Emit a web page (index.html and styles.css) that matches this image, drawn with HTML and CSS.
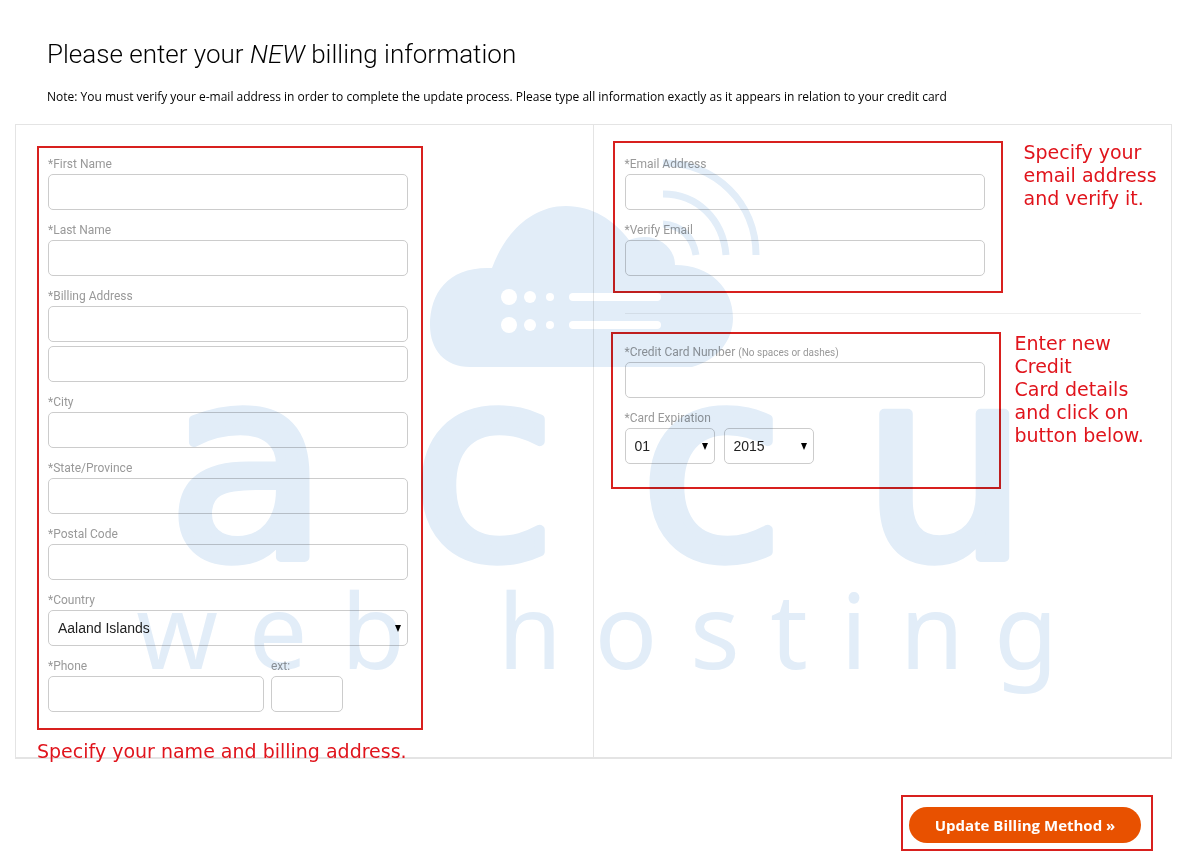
FILE: index.html
```html
<!DOCTYPE html>
<html lang="en">
<head>
    <meta charset="utf-8">
    <title>Update Billing Method</title>
    <link rel="stylesheet" href="styles.css">
</head>
<body>
    <header class="intro">
        <h1>Please enter your <em>NEW</em> billing information</h1>
        <p>Note: You must verify your e-mail address in order to complete the update process. Please type all information exactly as it appears in relation to your credit card</p>
    </header>
    <form>
        <div class="panel">
            <div class="column address">
                <div class="frame frame-address">
                    <div class="field">
                        <label for="first-name">*First Name</label>
                        <input type="text" id="first-name">
                    </div>
                    <div class="field">
                        <label for="last-name">*Last Name</label>
                        <input type="text" id="last-name">
                    </div>
                    <div class="field">
                        <label for="address-1">*Billing Address</label>
                        <input type="text" id="address-1">
                        <input type="text" id="address-2" class="second-line" aria-label="Billing Address line 2">
                    </div>
                    <div class="field">
                        <label for="city">*City</label>
                        <input type="text" id="city">
                    </div>
                    <div class="field">
                        <label for="state">*State/Province</label>
                        <input type="text" id="state">
                    </div>
                    <div class="field">
                        <label for="postal-code">*Postal Code</label>
                        <input type="text" id="postal-code">
                    </div>
                    <div class="field">
                        <label for="country">*Country</label>
                        <div class="select">
                            <select id="country">
                                <option>Aaland Islands</option>
                            </select>
                        </div>
                    </div>
                    <div class="phone-row">
                        <div class="field phone">
                            <label for="phone">*Phone</label>
                            <input type="tel" id="phone">
                        </div>
                        <div class="field ext">
                            <label for="ext">ext:</label>
                            <input type="text" id="ext">
                        </div>
                    </div>
                </div>
                <p class="hint">Specify your name and billing address.</p>
            </div>

            <div class="column payment">
                <div class="step step-email">
                    <div class="frame frame-email">
                        <div class="field">
                            <label for="email">*Email Address</label>
                            <input type="email" id="email">
                        </div>
                        <div class="field">
                            <label for="verify-email">*Verify Email</label>
                            <input type="email" id="verify-email">
                        </div>
                    </div>
                    <p class="hint">Specify your<br>email address<br>and verify it.</p>
                </div>
                <hr>
                <div class="step step-card">
                    <div class="frame frame-card">
                        <div class="field">
                            <label for="card-number">*Credit Card Number <small>(No spaces or dashes)</small></label>
                            <input type="text" id="card-number">
                        </div>
                        <div class="field">
                            <label for="card-month">*Card Expiration</label>
                            <div class="expiration">
                                <div class="select">
                                    <select id="card-month">
                                        <option>01</option>
                                    </select>
                                </div>
                                <div class="select">
                                    <select id="card-year" aria-label="Card expiration year">
                                        <option>2015</option>
                                    </select>
                                </div>
                            </div>
                        </div>
                    </div>
                    <p class="hint">Enter new<br>Credit<br>Card details<br>and click on<br>button below.</p>
                </div>
            </div>

            <svg class="watermark" viewBox="15 124 1157 635" aria-hidden="true">
                <!-- cloud -->
                <path d="M470 367C445 367 430 350 430 325C430 292 449 266 492 268C504 235 530 206 566 206C592 206 614 220 629 240C634 238 640 237 645 237C662 237 675 250 675 265C710 265 733 288 733 318C733 340 718 360 692 367Z"/>
                <g class="cutout">
                    <circle cx="509" cy="297" r="8"/>
                    <circle cx="530" cy="297" r="6"/>
                    <circle cx="550" cy="297" r="4"/>
                    <rect x="569" y="293" width="92" height="8" rx="4"/>
                    <circle cx="509" cy="325" r="8"/>
                    <circle cx="530" cy="325" r="6"/>
                    <circle cx="550" cy="325" r="4"/>
                    <rect x="569" y="321" width="92" height="8" rx="4"/>
                </g>
                <!-- signal -->
                <g class="signal">
                    <path d="M663 163C716 163 756 203 756 255"/>
                    <path d="M663 194C697 194 723 219 726 255"/>
                    <path d="M663 224C681 225 693 237 696 255"/>
                </g>
                <text class="brand" x="248 484 712 945" y="557">accu</text>
                <text class="tagline" x="177 278 373 530 530 626 715 789 854 932 1026" y="669">web hosting</text>
            </svg>
        </div>

        <div class="actions">
            <div class="frame frame-submit">
                <button type="submit">Update Billing Method »</button>
            </div>
        </div>
    </form>
</body>
</html>
```
FILE: styles.css
```css
* {
    box-sizing: border-box;
}

body {
    margin: 0;
    padding: 36px 16px 2px 15px;
    background: #fff;
    color: #000;
    font-family: Roboto, sans-serif;
}

.intro {
    padding-left: 32px;
}

h1 {
    margin: 0;
    font-size: 26px;
    font-weight: 300;
    line-height: 36px;
}

.intro p {
    margin: 16px 0 18px;
    font-family: "Open Sans", sans-serif;
    font-size: 12px;
    line-height: 18px;
}

.panel {
    position: relative;
    display: grid;
    grid-template-columns: 1fr 1fr;
    border: 1px solid #e4e4e4;
    border-bottom-width: 2px;
}

.address {
    padding: 21px 0 0 21px;
    border-right: 1px solid #e4e4e4;
}

.payment {
    padding: 16px 12px 0 17px;
}

.frame {
    border: 2px solid #d8201e;
}

.frame-address {
    width: 386px;
    padding: 7px 13px 16px 9px;
}

.frame-email {
    width: 390px;
    padding: 12px 16px 15px 10px;
}

.frame-card {
    width: 390px;
    padding: 9px 14px 23px 12px;
}

.field + .field,
.field + .phone-row {
    margin-top: 11px;
}

label {
    display: block;
    margin-bottom: 1px;
    color: #999;
    font-size: 12px;
    line-height: 18px;
}

label small {
    font-size: 10px;
    line-height: 1;
}

input,
select {
    display: block;
    width: 100%;
    height: 36px;
    padding: 0 9px;
    border: 1px solid #ccc;
    border-radius: 5px;
    background: #fff;
    color: #222;
    font-family: "Liberation Sans", Arial, sans-serif;
    font-size: 14px;
}

select {
    appearance: none;
}

.second-line {
    margin-top: 4px;
}

.select {
    position: relative;
}

.select::after {
    content: "";
    position: absolute;
    top: 15px;
    right: 7px;
    border: 3px solid transparent;
    border-top: 7px solid #000;
    border-bottom: 0;
    pointer-events: none;
}

.phone-row {
    display: flex;
    gap: 7px;
}

.phone-row .field {
    margin-top: 0;
}

.phone {
    width: 216px;
}

.ext {
    width: 72px;
}

.step {
    display: flex;
    align-items: flex-start;
}

.step .frame {
    flex: none;
}

.step-email {
    gap: 21px;
    padding-left: 2px;
}

.step-card {
    gap: 14px;
}

hr {
    margin: 20px 18px 18px 14px;
    border: 0;
    border-top: 1px solid #eee;
}

.expiration {
    display: flex;
    gap: 9px;
}

.expiration .select {
    width: 90px;
}

.hint {
    margin: 0;
    color: #e0141c;
    font-family: "DejaVu Sans", sans-serif;
    font-size: 19px;
    line-height: 23px;
    white-space: nowrap;
}

/* runs over the bottom edge of the panel */
.address .hint {
    margin: 10px 0 -6px;
}

.watermark {
    position: absolute;
    top: -1px;
    left: -1px;
    width: calc(100% + 2px);
    fill: #e2edf8;
    mix-blend-mode: multiply;
    pointer-events: none;
}

.cutout {
    fill: #fff;
}

.signal {
    fill: none;
    stroke: #e2edf8;
    stroke-width: 7;
}

.brand {
    font-family: "DejaVu Sans", sans-serif;
    font-size: 262px;
    text-anchor: middle;
    stroke: #e2edf8;
    stroke-width: 10;
    stroke-linejoin: round;
}

.tagline {
    font-family: "Noto Sans", sans-serif;
    font-size: 104px;
    text-anchor: middle;
}

.actions {
    display: flex;
    justify-content: flex-end;
    padding: 36px 19px 0 0;
}

.frame-submit {
    padding: 10px 10px 6px 6px;
}

button {
    display: block;
    width: 232px;
    height: 36px;
    border: 0;
    border-radius: 18px;
    background: #e85100;
    color: #fff;
    font-family: "Open Sans", sans-serif;
    font-size: 15px;
    font-weight: bold;
    cursor: pointer;
}

button:hover {
    background: #cf4800;
}
```
